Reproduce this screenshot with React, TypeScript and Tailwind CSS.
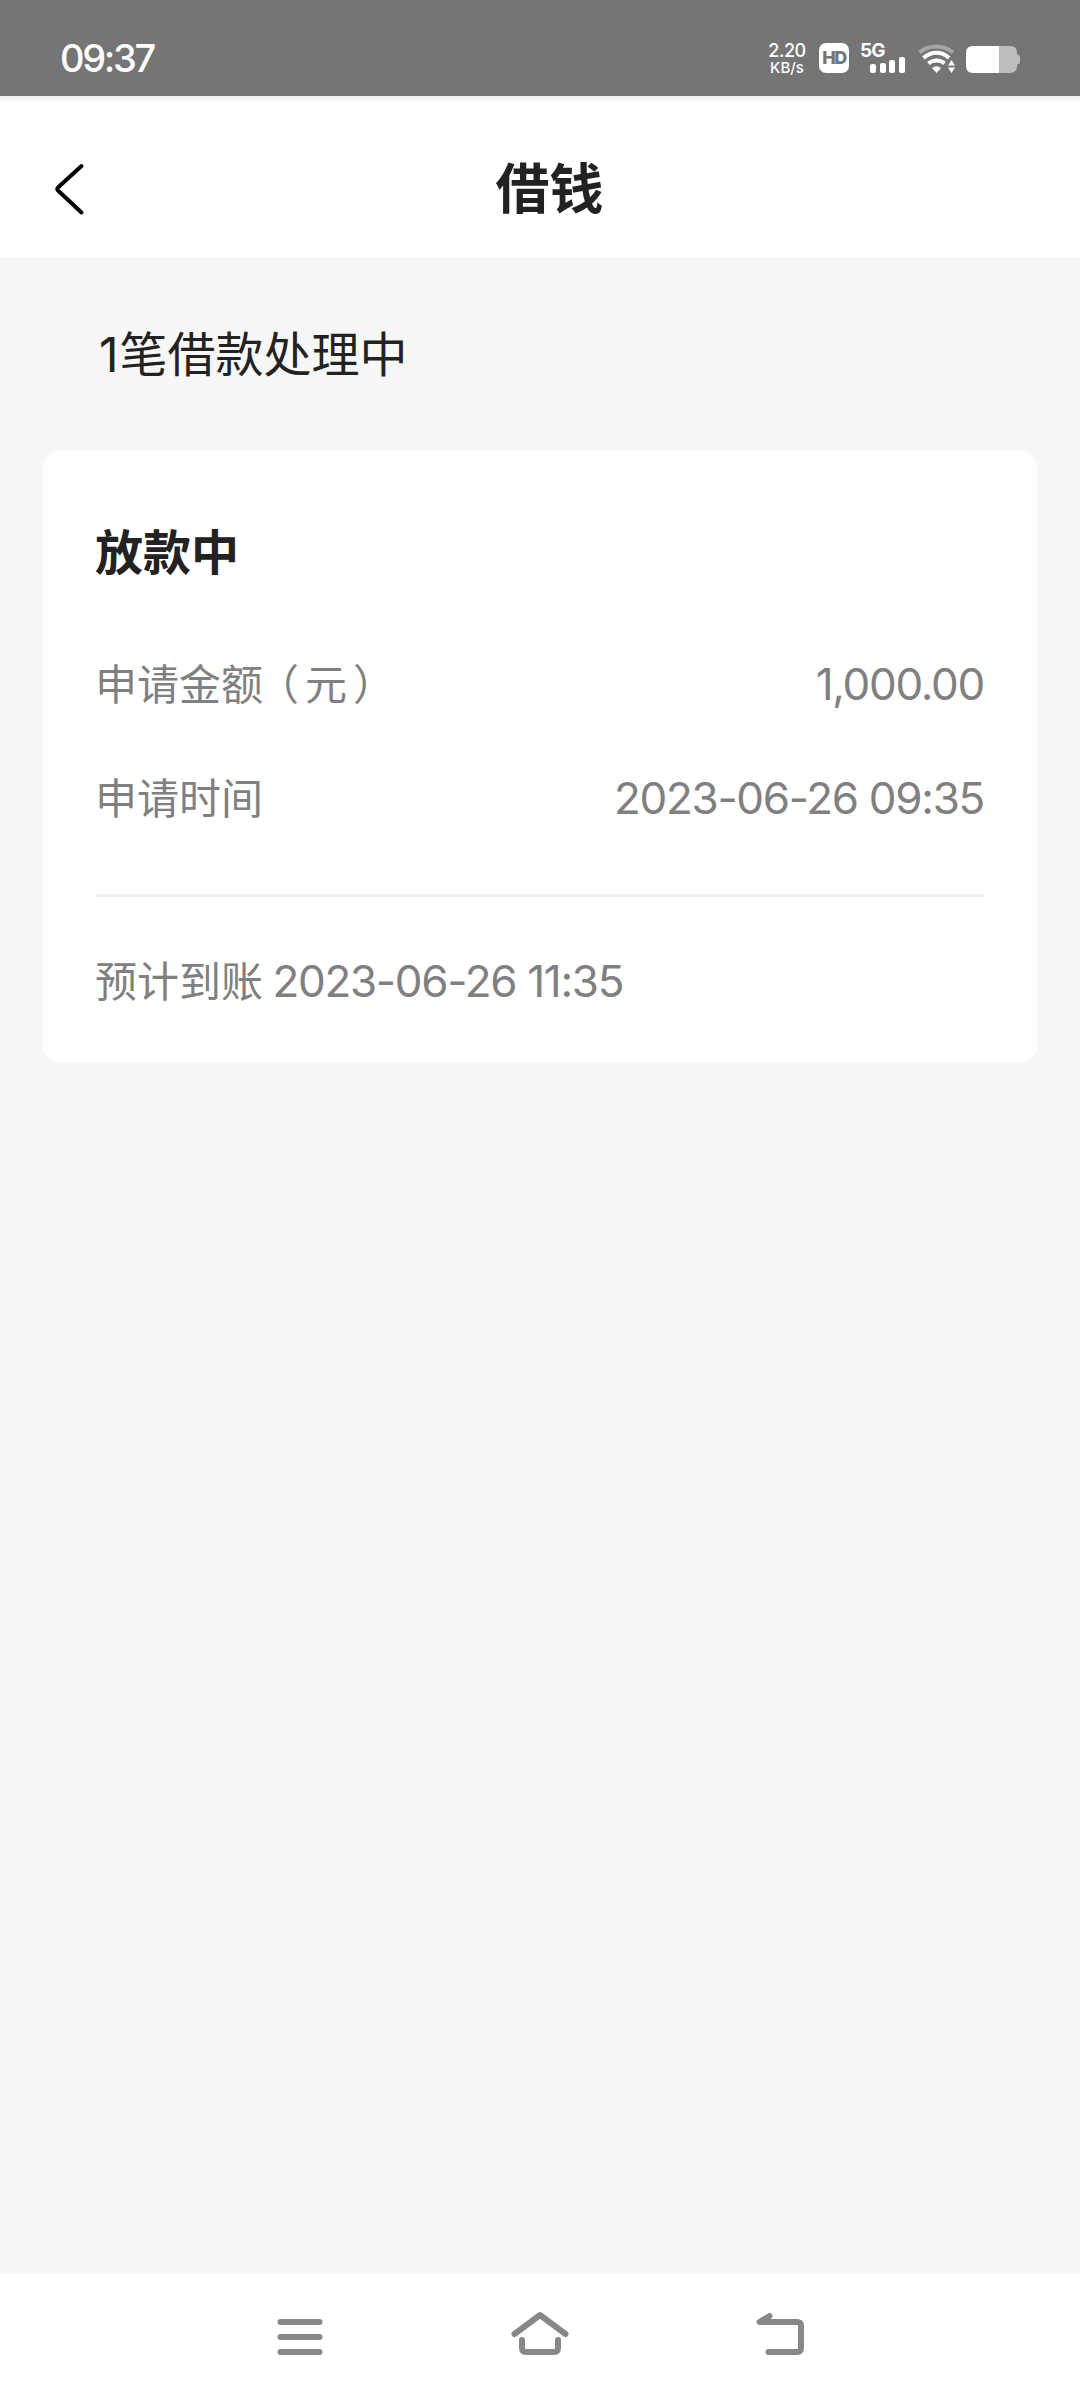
import type { ReactNode } from "react";

const Digits = ({ children }: { children: ReactNode }) => (
  <span className="mr-[1px] font-['Inter',sans-serif] text-[44px] leading-none tracking-[-1.3px]">{children}</span>
);

const StatusBar = () => (
  <div className="flex h-24 shrink-0 items-start justify-between bg-[#757575] px-[60px] text-white">
    <span className="mt-[34px] font-['Inter',sans-serif] text-[38px] leading-[48px] font-[450] tracking-[-2.3px]">09:37</span>

    <div className="mt-[42px] flex items-start">
      <div className="w-[38px] text-center font-['Inter',sans-serif] font-medium">
        <div className="text-[18px] leading-[17px] tracking-[-0.5px]">2.20</div>
        <div className="mt-px text-[15px] leading-[15px] whitespace-nowrap">KB/s</div>
      </div>

      <div className="mt-px ml-[13px] flex h-[30px] w-[30px] items-center justify-center rounded-[7px] bg-white font-['Inter',sans-serif] text-[18px] leading-none font-extrabold tracking-[-1.5px] text-[#757575]">
        HD
      </div>

      <div className="ml-[11px] h-[32px] w-[46px]">
        <div className="font-['Inter',sans-serif] text-[19px] leading-[18px] font-bold tracking-[-0.8px]">5G</div>
        <div className="-mt-[3px] ml-[10px] flex items-end gap-[3.5px]">
          <div className="h-[9px] w-[6px] rounded-[2px] bg-white" />
          <div className="h-[10px] w-[6px] rounded-[2px] bg-white" />
          <div className="h-[13px] w-[6px] rounded-[2px] bg-white" />
          <div className="h-[16px] w-[6px] rounded-[2px] bg-white" />
        </div>
      </div>

      <svg className="mt-[2px] ml-[12px]" width="38" height="30" viewBox="0 0 38 30" fill="none">
        <path d="M1.5 8.5C11 .5 25 .5 35 8.5" stroke="#a6a6a6" strokeWidth="4" />
        <path d="M5.5 14C13 7 24 7 31 14" stroke="#fff" strokeWidth="4" />
        <path d="M10.5 19.5C15 15.500 22 15.500 26.500 19.500" stroke="#fff" strokeWidth="4" />
        <path d="M14 24Q18.500 20.500 23 24L18.500 29Z" fill="#fff" />
        <path d="M30 21.500L33.500 16L37 21.500ZM30 23.500L33.500 29L37 23.500Z" fill="#fff" />
      </svg>

      <svg className="mt-[4px] ml-[10px]" width="54" height="27" viewBox="0 0 54 27">
        <path d="M33 0H44Q51 0 51 7V8.500Q54 9 54 11V16Q54 18 51 18.500V20Q51 27 44 27H33Z" fill="#bdbdbd" />
        <path d="M33 0H7Q0 0 0 7V20Q0 27 7 27H33Z" fill="#fff" />
      </svg>
    </div>
  </div>
);

const Header = () => (
  <div className="grid h-[161px] shrink-0 grid-cols-3 items-center bg-linear-to-b from-[#ededed] via-white via-5% to-white px-[54px] pt-[18px]">
    <svg width="32" height="54" viewBox="0 0 32 54" fill="none" className="mt-[6px]">
      <path d="M27.500 4L4 25.500Q2.500 27 4 28.500L27.500 50.500" stroke="#000" strokeWidth="4" strokeLinecap="round" />
    </svg>
    <h1 className="pl-[19px] text-center text-[54px] leading-[78px] font-bold">借钱</h1>
  </div>
);

const Row = ({ label, value }: { label: ReactNode; value: string }) => (
  <div className="flex h-[114px] items-center justify-between">
    <span className="-mt-[6px]">{label}</span>
    <Digits>{value}</Digits>
  </div>
);

const NavBar = () => (
  <div className="flex h-[126px] shrink-0 justify-center gap-[180px] bg-white pt-[33px]">
    <svg width="60" height="60" viewBox="0 0 60 60" fill="none" stroke="#888" strokeWidth="6" strokeLinecap="round">
      <path d="M10.500 15H49.500M10.500 30H49.500M10.500 45H49.500" />
    </svg>
    <svg width="60" height="60" viewBox="0 0 60 60" fill="none" stroke="#888" strokeWidth="6" strokeLinecap="round" strokeLinejoin="round">
      <path d="M4.500 27L30 8L55.500 27" />
      <path d="M12 33V41Q12 45 16 45H44Q48 45 48 41V33" />
    </svg>
    <svg width="60" height="60" viewBox="0 0 60 60" fill="none" stroke="#888" strokeWidth="6" strokeLinecap="round" strokeLinejoin="round">
      <path d="M19.500 9L9.500 15H47Q51 15 51 19V41Q51 45 47 45H18.500" />
    </svg>
  </div>
);

export default function App() {
  return (
    <main className="flex h-[2400px] w-[1080px] flex-col bg-[#f7f7f7] font-['Noto_Sans_CJK_SC',sans-serif] text-[#222]">
      <StatusBar />
      <Header />

      <div className="flex-1 px-[43px]">
        <p className="h-[132px] pt-[59px] pl-[56px] text-[48px] leading-[70px]">
          <span className="mr-[1px] font-['Inter',sans-serif] leading-none">1</span>笔借款处理中
        </p>

        <section className="mt-[62px] h-[611px] rounded-[16px] bg-white px-[52px] pt-[63px] text-[42px] text-[#808080]">
          <h2 className="mb-[43px] text-[48px] leading-[70px] font-bold text-[#222]">放款中</h2>
          {/* half-width brackets, spaced out evenly around 元 */}
          <Row
            label={
              <>
                申请金额<span className="mr-[6px] ml-[15px] [font-feature-settings:'halt']">（</span>元<span className="ml-[6px] [font-feature-settings:'halt']">）</span>
              </>
            }
            value="1,000.00"
          />
          <Row label="申请时间" value="2023-06-26 09:35" />
          <div className="mt-[39px] border-t-[3px] border-[#f0f0f0] pt-[50px] leading-[63px]">
            预计到账 <Digits>2023-06-26 11:35</Digits>
          </div>
        </section>
      </div>

      <NavBar />
    </main>
  );
}
